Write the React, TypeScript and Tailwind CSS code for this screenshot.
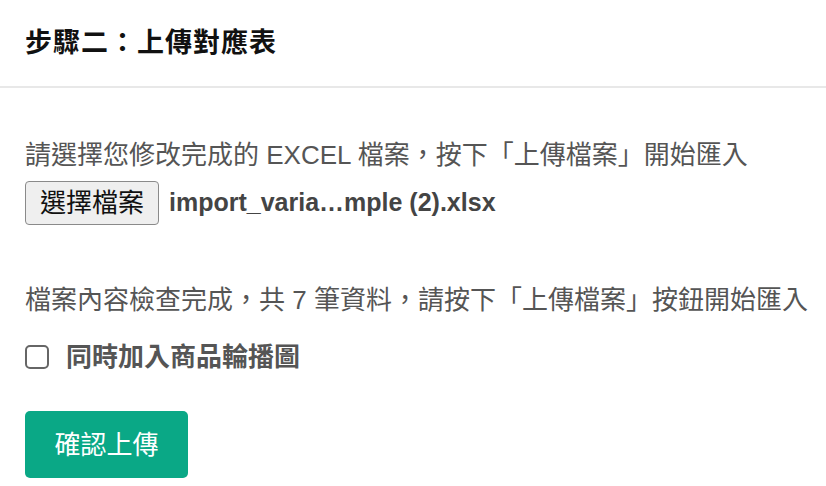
import React from "react";

export default function App() {
  const font = { fontFamily: '"Liberation Sans", "Noto Sans CJK TC", sans-serif' };
  return (
    <div className="w-[826px] h-[486px] bg-white overflow-hidden" style={font}>
      <div className="h-[88px] flex items-center px-[25px] border-b-2 border-[#e8e8e8]">
        <h1 className="text-[27px] font-bold text-[#111] leading-none tracking-[1px]">步驟二：上傳對應表</h1>
      </div>
      <div className="px-[25px]">
        <p className="mt-[49px] text-[26px] leading-[36px] text-[#555] whitespace-nowrap">
          請選擇您修改完成的 EXCEL 檔案，按下「上傳檔案」開始匯入
        </p>
        <div className="mt-[8px] flex items-center h-[44px]">
          <button className="h-[44px] px-[14px] border border-[#8a8a8a] rounded-[4px] bg-[#efefef] text-[26px] text-[#111] leading-none">
            選擇檔案
          </button>
          <span className="ml-[10px] text-[25px] font-bold text-[#444] whitespace-nowrap">
            import_varia…mple (2).xlsx
          </span>
        </div>
        <p className="mt-[57px] text-[26px] leading-[36px] text-[#555] whitespace-nowrap">
          檔案內容檢查完成，共 7 筆資料，請按下「上傳檔案」按鈕開始匯入
        </p>
        <label className="mt-[21px] flex items-center h-[36px]">
          <span className="w-[24px] h-[24px] border-2 border-[#666] rounded-[5px] bg-white inline-block" />
          <span className="ml-[17px] text-[26px] font-bold text-[#555] leading-none">同時加入商品輪播圖</span>
        </label>
        <button className="mt-[36px] h-[67px] w-[163px] rounded-[5px] bg-[#0aa886] text-white text-[26px] leading-none flex items-center justify-center">
          確認上傳
        </button>
      </div>
    </div>
  );
}
